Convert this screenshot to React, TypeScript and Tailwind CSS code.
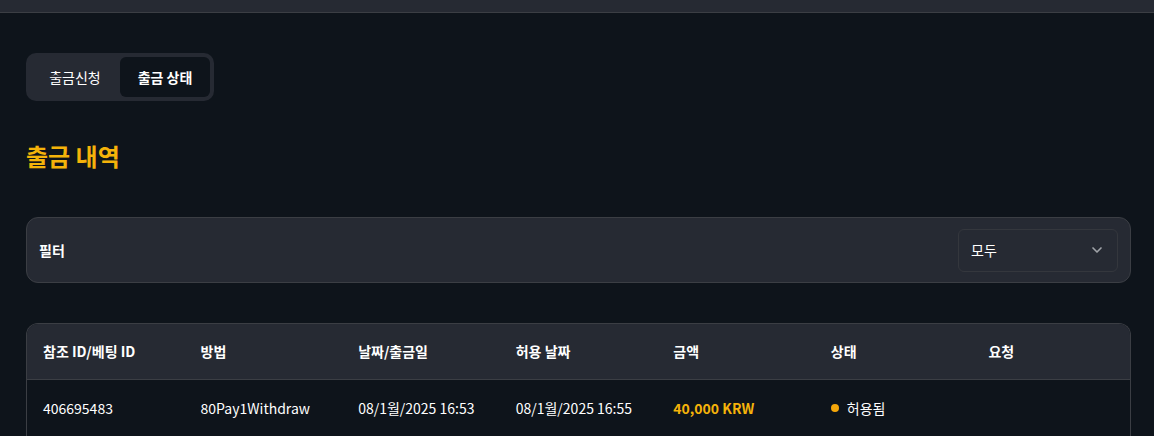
import { ChevronDown } from 'lucide-react';

const columns = ['참조 ID/베팅 ID', '방법', '날짜/출금일', '허용 날짜', '금액', '상태', '요청'];

export default function App() {
  return (
    <div
      className="min-h-[436px] bg-[#0e141b] text-white"
      style={{ fontFamily: '"Noto Sans CJK KR", "Noto Sans", sans-serif' }}
    >
      <div className="h-[13px] bg-[#262a33] border-b border-[#3b3e44]" />

      <div className="pl-[26px] pr-[23px] pt-[40px]">
        {/* tabs */}
        <div className="inline-flex rounded-[10px] bg-[#262a33] p-1">
          <button className="h-10 w-[90px] rounded-md text-[14px] text-white">출금신청</button>
          <button className="h-10 w-[90px] rounded-md bg-[#0e141b] text-[14px] font-bold text-white">
            출금 상태
          </button>
        </div>

        <h1 className="mt-[39px] text-[24px] font-bold leading-8 text-[#f5b30a]">출금 내역</h1>

        {/* filter */}
        <div className="mt-[45px] flex h-[66px] items-center justify-between rounded-xl border border-[#3b3e44] bg-[#262a33] px-[12px]">
          <span className="text-[14px] font-bold">필터</span>
          <div className="flex h-[43px] w-[160px] items-center justify-between rounded-md border border-[#34373d] px-[12px]">
            <span className="text-[14px]">모두</span>
            <ChevronDown className="h-4 w-4 text-[#a0a3a8]" strokeWidth={2.5} />
          </div>
        </div>

        {/* table */}
        <div className="mt-[40px] overflow-hidden rounded-t-xl border border-b-0 border-[#3b3e44]">
          <table className="w-full table-fixed text-left">
            <thead className="bg-[#262a33]">
              <tr className="h-[55px] border-b border-[#3b3e44]">
                {columns.map((c) => (
                  <th key={c} className="px-4 text-[14px] font-bold">
                    {c}
                  </th>
                ))}
              </tr>
            </thead>
            <tbody>
              <tr className="h-[58px] border-b border-[#3b3e44] text-[14px]">
                <td className="px-4">406695483</td>
                <td className="px-4">80Pay1Withdraw</td>
                <td className="px-4">08/1월/2025 16:53</td>
                <td className="px-4">08/1월/2025 16:55</td>
                <td className="px-4 font-bold text-[#f5b30a]">40,000 KRW</td>
                <td className="px-4">
                  <span className="flex items-center gap-2">
                    <span className="h-2 w-2 rounded-full bg-[#f5a70a]" />
                    허용됨
                  </span>
                </td>
                <td className="px-4" />
              </tr>
            </tbody>
          </table>
        </div>
      </div>
    </div>
  );
}
